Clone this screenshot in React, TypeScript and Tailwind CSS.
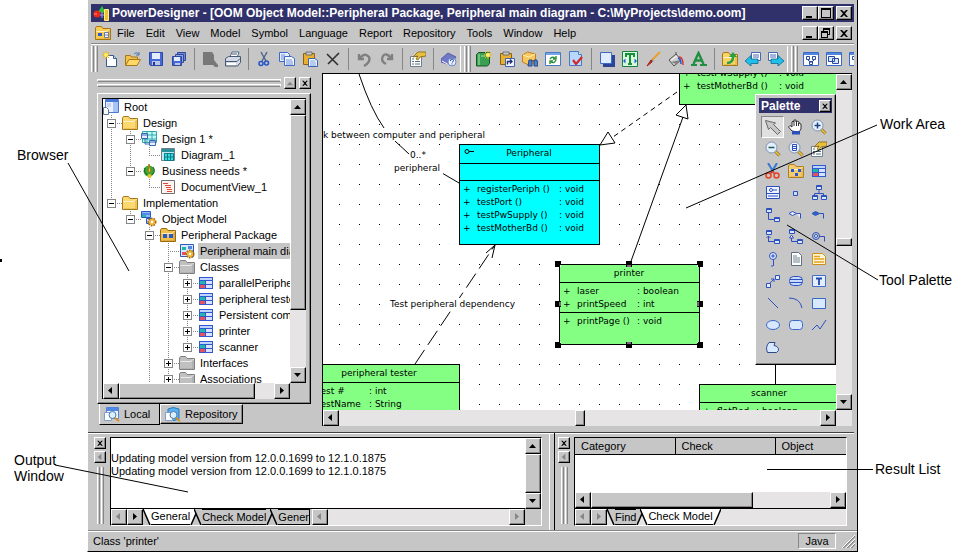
import type { ReactNode } from "react";
import clsx from "clsx";

const blue = "#2c50c0";

const magnifier = (inner: ReactNode) => (
  <>
    <path d="M10 10l4.500 4.500" stroke="#8a6a10" strokeWidth="3" />
    <path d="M10 10l4.500 4.500" stroke="#f0c850" strokeWidth="1.500" />
    <circle cx="6.500" cy="6.500" r="5.500" fill="#e4f0ff" stroke="#8090a8" />
    {inner}
  </>
);

const folder = (fill: string, dark: string) => (
  <>
    <path d="M.500 14.500V3l1-1.500h5l1.500 2h7.500v11z" fill={fill} stroke={dark} />
    <path d="M1.500 6.500h10l3-2" fill="none" stroke="#fff" opacity=".7" />
    <path d="M14 5v9H2" fill="none" stroke={dark} opacity=".4" />
  </>
);

const properties = (
  <>
    <path d="M.500 5.500h11v10h-11z" fill="#fff" stroke="#70808c" />
    <path d="M2 8h2M2 10.500h2M2 13h2M5 10.500h5M5 13h5" stroke="#507080" />
    <path d="M3 6l5-5h8v4l-6 1-2 3-2-1 2-3z" fill="#e8c040" stroke="#806010" strokeWidth=".8" />
  </>
);

const classBox = (
  <>
    <path d="M1 2h14v12H1z" fill="#3058d0" />
    <path d="M2 3h12v2H2z" fill="#c0d4fc" />
    <path d="M2 6h5v3H2z" fill="#20b8a8" />
    <path d="M2 10h5v3H2z" fill="#e85060" />
    <path d="M8 6h6v3H8zM8 10h6v3H8z" fill="#d8e4ff" />
  </>
);

const gear = (
  <>
    <circle cx="11" cy="11" r="3.500" fill="#e8a828" stroke="#a06808" strokeDasharray="1.500 1" strokeWidth="2" />
    <circle cx="11" cy="11" r="3" fill="#f0b838" />
    <circle cx="11" cy="11" r="1.200" fill="#fff" />
  </>
);

const miniBox = (x: number, y: number) => (
  <path d={`M${x + 0.5} ${y + 0.5}h5v4h-5zM${x + 0.5} ${y + 1.5}h5`} fill="#dce8ff" stroke={blue} />
);

const pages = (
  <>
    <path d="M.500 1.500h8l2 2v7H.500z" fill="#e4eeff" stroke="#4068c8" />
    <path d="M5.500 5.500h7l3 2v7h-10z" fill="#f4f8ff" stroke="#4068c8" />
    <path d="M2 4h4M2 6h3M2 8h3M7 9h6M7 11h7M7 13h7" stroke="#6890e0" />
  </>
);

const clipboard = (
  <>
    <path d="M1.500 2.500h11v11h-11z" fill="#e8b030" stroke="#906010" />
    <path d="M4 1h6v3H4z" fill="#c8c8c8" stroke="#606060" strokeWidth=".8" />
  </>
);

const viewTab = (
  <>
    <path d="M2.500 1.500h12v11h-12z" fill="#f0f6ff" stroke="#5080d8" />
    <path d="M3 2h11v3H3z" fill="#5088e8" />
    <path d="M.500 6.500h7v8h-7z" fill="#fff" stroke="#80a0d0" />
    <circle cx="8.500" cy="9" r="3.500" fill="#d8f0ff" stroke="#5878a8" />
    <path d="M11 12l4 3" stroke="#d89020" strokeWidth="2" />
  </>
);

const icons: Record<string, ReactNode> = {
  app: (
    <>
      <path d="M5 7l4-6 4 7z" fill="#30c040" />
      <circle cx="4" cy="9" r="3.500" fill="#e82818" />
      <path d="M1 9h3" stroke="#ff9080" />
      <path d="M7 10h4M9 7v6" stroke="#a0a0f0" />
      <path d="M11.500 4.500h4v11h-4z" fill="#f0c030" stroke="#fff080" />
    </>
  ),
  model: (
    <>
      {folder("#f8cc50", "#a87410")}
      <path d="M3 8h4v3H3z" fill="#2858d0" />
      <path d="M9.500 7.500h4v5h-4zM9.500 10h4" fill="#fff" stroke="#6878a8" />
    </>
  ),
  new: (
    <>
      <path d="M4.500 4.500h7l3 3v8h-10z" fill="#fff" stroke="#385890" />
      <path d="M11.500 4.500v3h3" fill="#c8dcf8" stroke="#385890" />
      <path d="M4 0v8M0 4h8M1 1l6 6M7 1L1 7" stroke="#e8b020" />
      <circle cx="4" cy="4" r="2" fill="#fff060" />
    </>
  ),
  open: (
    <>
      <path d="M.500 14V4.500h5l1 1.500h6v2" fill="#f0c048" stroke="#a87818" />
      <path d="M.500 14.500l3.500-6h11.500l-3.500 6z" fill="#ffd868" stroke="#a87818" />
      <path d="M9 3q3-3 5 1m0-3v3h-3" fill="none" stroke="#4878b0" />
    </>
  ),
  save: (
    <>
      <path d="M1.500 1.500h13v13h-12l-1-1z" fill="#4468d8" stroke="#2c48a8" />
      <path d="M4 2h8v6H4z" fill="#e4ecff" />
      <path d="M4 10h8v4H4z" fill="#b8c4e8" />
      <path d="M5 11h2v3H5z" fill="#203890" />
    </>
  ),
  saveAll: (
    <>
      <path d="M6.500 1.500h8v8h-8z" fill="#7088d8" stroke="#304898" />
      <path d="M4.500 3.500h8v8h-8z" fill="#90a4e8" stroke="#304898" />
      <path d="M1.500 5.500h9v9h-9z" fill="#4468d8" stroke="#304898" />
      <path d="M3 6h6v4H3z" fill="#e4ecff" />
      <path d="M4 12h5v2H4z" fill="#b8c4e8" />
    </>
  ),
  docGray: <path d="M1 1h9l2 3v5l4 5v2h-3l-2-2H1z" fill="#787878" />,
  print: (
    <>
      <path d="M5 6l2-5h7l-2 6" fill="#fff" stroke="#506890" />
      <path d="M.500 7.500l3-2h12v6l-3 3.500H.500z" fill="#d4dae8" stroke="#485870" />
      <path d="M1 10.500h11l3-3M7 3h5" stroke="#485870" fill="none" />
      <path d="M2 13h9" stroke="#fff" strokeWidth="2" />
    </>
  ),
  cut: (
    <>
      <path d="M5 1l5 9M11 1L6 10" stroke="#506888" strokeWidth="1.500" />
      <circle cx="5" cy="12.500" r="2" fill="none" stroke="#2858c8" strokeWidth="1.600" />
      <circle cx="10.500" cy="12" r="2" fill="none" stroke="#2858c8" strokeWidth="1.600" />
    </>
  ),
  copy: pages,
  paste: (
    <>
      {clipboard}
      <path d="M6.500 7.500h6l3 2v6h-9z" fill="#f0f6ff" stroke="#4060b0" />
      <path d="M8 10h5M8 12h6M8 14h6" stroke="#80a0e0" />
    </>
  ),
  delete: <path d="M2 3l11 11M14 2L3 13" stroke="#303030" strokeWidth="1.600" />,
  undo: <path d="M3 3v5h5M4 7q5-6 9-1 2 5-5 9" fill="none" stroke="#808080" strokeWidth="2.400" />,
  redo: <path d="M13 3v5H8M12 7Q7 1 4 5q-3 5 3 8" fill="none" stroke="#808080" strokeWidth="2.400" />,
  properties,
  help: (
    <>
      <path d="M0 8l7-6 8 4-6 8-9-3z" fill="#7078c8" stroke="#585ca8" />
      <path d="M1 10l7 4 1-1" fill="none" stroke="#fff" />
      <circle cx="11" cy="11" r="4" fill="#e8f0ff" stroke="#7088c0" />
      <path d="M9.500 10q0-2 1.500-2t1.500 1.500q0 1-1.500 2M11 12.500v1" fill="none" stroke="#2040a0" />
    </>
  ),
  book: (
    <>
      <path d="M.500 3.500l2-2h11v11l-2 2.500h-11z" fill="#38a050" stroke="#185828" />
      <path d="M3 3v11M5 5h4" stroke="#a8e0b0" />
      <path d="M12 0v8M8 4h8M9 1l6 6M15 1L9 7" stroke="#e8b800" />
      <circle cx="12" cy="4" r="2" fill="#fff080" />
    </>
  ),
  pasteLink: (
    <>
      {clipboard}
      <path d="M6.500 7.500h9v8h-9z" fill="#f0f6ff" stroke="#4060b0" />
      <path d="M8.500 13.500v-3h4.500m-2-2l2 2-2 2" fill="none" stroke="#203070" strokeWidth="1.400" />
    </>
  ),
  find: (
    <>
      <path d="M.500 4l5-3 8 2v8l-7 3-6-3z" fill="#f8c860" stroke="#c08020" />
      <path d="M1 4l6 2 6-3" fill="none" stroke="#fff0b0" />
      <path d="M7 9h3v6H6zM12 9h3l1 6h-4zM9 10h4" fill="#5080c8" stroke="#284880" />
    </>
  ),
  refresh: (
    <>
      <path d="M.500 1.500h15v13H.500z" fill="#fff" stroke="#4878c8" />
      <path d="M1 2h14v2H1z" fill="#78a4e8" />
      <path d="M5 8q2-3 5-1m1-2v3H8M11 9q-2 4-5 2m-1 2v-3h3" fill="none" stroke="#289038" strokeWidth="1.400" />
    </>
  ),
  check: (
    <>
      <path d="M1.500 .500h9l3 3v11h-12z" fill="#b8d8ff" stroke="#4878c8" />
      <path d="M10.500 .500v3h3" fill="#fff" stroke="#4878c8" />
      <path d="M5 9l3 4 6-7" fill="none" stroke="#d02828" strokeWidth="2.200" />
    </>
  ),
  shadow: (
    <>
      <path d="M4 4h12v12H4z" fill="#2c4498" />
      <path d="M1.500 1.500h11v11h-11z" fill="#e0ecff" stroke="#4068c8" />
    </>
  ),
  textFrame: (
    <>
      <path d="M.500 .500h15v15H.500z" fill="#d8f8e0" stroke="#18803c" />
      <path d="M4 6V3h8v3M8 3v10M6 13h4" fill="none" stroke="#189038" strokeWidth="2" />
      <path d="M1 10l2.500-2.500v5zM15 10l-2.500-2.500v5z" fill="#2858d0" />
    </>
  ),
  brush: (
    <>
      <path d="M15 1L7 9" stroke="#e8a030" strokeWidth="2.200" />
      <path d="M7 8l2 2-2 1-2-1z" fill="#888" />
      <path d="M6 9l-4 6 5-4z" fill="#d03020" stroke="#a02010" />
    </>
  ),
  bucket: (
    <>
      <path d="M1 9l7-6 5 6-7 6z" fill="#d0d0d0" stroke="#505050" />
      <path d="M3 11l5 2 4-4z" fill="#808080" />
      <path d="M3 9l6-4" stroke="#fff" />
      <path d="M8 3V1" stroke="#505050" />
      <path d="M11 6q4 0 4 8" fill="none" stroke="#d83030" strokeWidth="1.500" />
      <path d="M10 7q3 1 3 6" fill="none" stroke="#2858d0" strokeWidth="1.500" />
    </>
  ),
  font: (
    <>
      <path d="M2.500 13L7.500 2l5 11M5 9.500h6" fill="none" stroke="#209040" strokeWidth="2.400" />
      <path d="M0 14h6M9 14h7" stroke="#209040" strokeWidth="2" />
    </>
  ),
  folderUp: (
    <>
      {folder("#f8d468", "#a87818")}
      <path d="M5 12q6 0 6-6" fill="none" stroke="#28a040" strokeWidth="2.500" />
      <path d="M7 6l4-5 4 5z" fill="#28a040" />
    </>
  ),
  back: (
    <>
      <path d="M6.500 1.500h9v8h-9z" fill="#fff" stroke="#4868b8" />
      <path d="M8 4h6M8 6h6" stroke="#4868b8" />
      <path d="M0 10l6-5.500V8h7v4.500H6V15z" fill="#20c0e8" stroke="#106890" strokeWidth=".8" />
    </>
  ),
  forward: (
    <>
      <path d="M.500 1.500h9v8h-9z" fill="#fff" stroke="#4868b8" />
      <path d="M2 4h6M2 6h6" stroke="#4868b8" />
      <path d="M16 10l-6-5.500V8H3v4.500h7V15z" fill="#20c0e8" stroke="#106890" strokeWidth=".8" />
    </>
  ),
  diagram: (
    <>
      <path d="M.500 1.500h15v13H.500z" fill="#fff" stroke="#3868c8" />
      <path d="M1 2h14v2H1z" fill="#5088e0" />
      <path d="M3.500 5.500h3v3h-3zM9.500 5.500h3v3h-3zM6.500 10.500h3v3h-3zM5 9l3 2.500L11 9" fill="none" stroke="#2848a0" />
    </>
  ),
  windows: (
    <>
      <path d="M.500 1.500h15v13H.500z" fill="#fff" stroke="#3868c8" />
      <path d="M1 2h14v2H1z" fill="#5088e0" />
      <path d="M2.500 5.500h6v5h-6zM6.500 7.500h6v5h-6z" fill="#d8e8ff" stroke="#2848a0" />
    </>
  ),
  root: (
    <>
      <path d="M2.500.500h13v13h-13z" fill="#e8f0ff" stroke="#4878d0" />
      <path d="M3 1h12v2H3z" fill="#4878d8" />
      <path d="M10 3h5v10h-5z" fill="#a8c4f4" />
      <path d="M4 5h4M4 7h4" stroke="#a0b8e0" />
      <path d="M.500 8.500h3l2 2v5h-5z" fill="#fff" stroke="#607898" />
    </>
  ),
  folder: folder("#fcd870", "#a87818"),
  grayFolder: folder("#c0c0c0", "#808080"),
  design: (
    <>
      <path d="M1.500.500h14v11h-14zM6 1v10M11 1v10M2 4h13M2 8h13" fill="#c0fcfc" stroke="#30a8a8" />
      <path d="M.500 2.500h6v5h-6zM8.500 9.500h6v5h-6z" fill="#e8f0ff" stroke="#3868b0" />
      <path d="M4 8v5h4M1 4h6M9 11h6" fill="none" stroke="#3868b0" />
    </>
  ),
  diagramDoc: (
    <>
      <path d="M1.500 1.500h13v12h-13z" fill="#c0e8f0" stroke="#708088" />
      <path d="M2 2h12v3H2z" fill="#289098" />
      <path d="M4.500 6.500h9v7h-9zM7.500 6v7M10.500 6v7M5 10h8" fill="#30e0e0" stroke="#107888" />
    </>
  ),
  needs: (
    <>
      <circle cx="8" cy="8" r="5.500" fill="#38a838" />
      <path d="M4 5q-2 4 2 7M12 4q3 4-1 8" stroke="#186020" fill="none" />
      <path d="M8 1l2 8H7z" fill="#f0d030" stroke="#a07810" />
      <circle cx="8.500" cy="13" r="2" fill="#e8c020" />
    </>
  ),
  document: (
    <>
      <path d="M1.500 1.500h13v13h-13z" fill="#fff4f0" stroke="#707070" />
      <path d="M3 4.500h5M5 6.500h6M6 8.500h5M7 10.500h5M7 12.500h5" stroke="#e04838" />
    </>
  ),
  objectModel: (
    <>
      <path d="M.500.500h9v6h-9zM.500 3h9" fill="#90b8ff" stroke="#2858c8" />
      <path d="M1 4h4v2H1z" fill="#20b8a8" />
      <path d="M5.500 7.500h5v5h-5z" fill="#c8dcff" stroke="#2858c8" />
      {gear}
    </>
  ),
  mainDiagram: (
    <>
      <path d="M1.500 1.500h13v12h-13z" fill="#d8e8ff" stroke="#3058c0" />
      <path d="M3 4h4v3H3z" fill="#20b8a8" />
      <path d="M9 3h4v3H9z" fill="#5088e0" />
      <path d="M3 9h4v3H3z" fill="#e85060" />
      {gear}
    </>
  ),
  package: (
    <>
      {folder("#f0c048", "#986810")}
      <path d="M3 7h4v4H3zM9 7h4v4H9z" fill="#2858d0" />
    </>
  ),
  class: classBox,
  local: viewTab,
  repository: (
    <>
      <path d="M3 3q5-3 11 0v10q-5 3-11 0z" fill="#58b0f0" stroke="#2878c0" />
      <path d="M.500 6.500h7v8h-7z" fill="#fff" stroke="#80a0d0" />
      <circle cx="8.500" cy="9" r="3.500" fill="#d8f0ff" stroke="#5878a8" />
      <path d="M11 12l4 3" stroke="#d89020" strokeWidth="2" />
    </>
  ),
  pointer: <path d="M.500 1.500l3 9 2-2 7 7 3-3-7-7 2-1.500z" fill="#c8c8c8" stroke="#686868" />,
  hand: (
    <>
      <path d="M4 12L.500 8l1.500-1.500L4 8V3l1-1 1 1V1h2v2l1-1 2 1v1l2 1v5l-2 3z" fill="#fff" stroke="#303030" />
      <path d="M6 3v4M8.500 3v4M10.500 4v3" stroke="#303030" />
      <path d="M4 12h8v3.500H4z" fill="#2850b8" />
    </>
  ),
  zoomIn: magnifier(<path d="M3.500 6.500h6M6.500 3.500v6" stroke="#204080" strokeWidth="1.500" />),
  zoomOut: magnifier(<path d="M3.500 6.500h6" stroke="#206050" strokeWidth="1.500" />),
  zoomPage: magnifier(<path d="M4.500 3.500h4v6h-4zM4.500 5.500h4M4.500 7.500h4" fill="#fff" stroke={blue} />),
  scissors: (
    <>
      <path d="M3 0l6 10M12 0L6 10" stroke="#3878d0" strokeWidth="2" />
      <circle cx="3.500" cy="12.500" r="2.500" fill="none" stroke="#e84020" strokeWidth="1.500" />
      <circle cx="11.500" cy="12.500" r="2.500" fill="none" stroke="#e84020" strokeWidth="1.500" />
      <path d="M5 11l2.500-2.500L10 11" fill="none" stroke="#e84020" strokeWidth="1.500" />
    </>
  ),
  palPackage: (
    <>
      {folder("#f4cc70", "#b08020")}
      <path d="M3 6h3v3H3zM10 6h3v3h-3zM7 10h3v3H7z" fill="#2858d0" />
    </>
  ),
  interface: (
    <>
      <path d="M1.500 1.500h13v12h-13zM2 8.500h12M3 11h10" fill="#f0f4ff" stroke={blue} />
      <circle cx="6" cy="5" r="1.500" fill="#fff" stroke={blue} />
      <path d="M8 5h4" stroke={blue} />
    </>
  ),
  port: <path d="M5.500 6.500h4v4h-4z" fill="#c8e0ff" stroke={blue} />,
  generalize: (
    <>
      {miniBox(5, 0)}
      {miniBox(1, 10)}
      {miniBox(10, 10)}
      <path d="M8 5v3M3.500 10V8.500h9V10" fill="none" stroke={blue} />
    </>
  ),
  associate: (
    <>
      {miniBox(1, 1)}
      {miniBox(9, 10)}
      <path d="M3.500 6v6.500H9" fill="none" stroke={blue} />
    </>
  ),
  aggregate: <path d="M1 6.500l3.500-2 4 2-4 2zM8.500 6.500h4v5" fill="#e8f0ff" stroke={blue} />,
  compose: (
    <>
      <path d="M1 6.500l3.500-2 4 2-4 2z" fill="#3060c0" stroke={blue} />
      <path d="M8.500 6.500h4v5" fill="none" stroke={blue} />
    </>
  ),
  depend: (
    <>
      {miniBox(1, 1)}
      {miniBox(9, 10)}
      <path d="M3.500 13V7l-2 2m2-2l2 2M3.500 12.500H9" fill="none" stroke={blue} />
    </>
  ),
  realize: (
    <>
      {miniBox(1, 0)}
      {miniBox(9, 10)}
      <path d="M3.500 6l-2 3h4z" fill="#fff" stroke={blue} />
      <path d="M3.500 9v3.500H9" fill="none" stroke={blue} />
    </>
  ),
  require: (
    <>
      <circle cx="5" cy="7" r="3.500" fill="none" stroke={blue} />
      <circle cx="5" cy="7" r="1.500" fill="#fff" stroke={blue} />
      <path d="M8 7.500h5.500v5" fill="none" stroke={blue} />
    </>
  ),
  provide: (
    <>
      <circle cx="8" cy="5" r="3.500" fill="#e8f0ff" stroke={blue} />
      <path d="M6 5h4M8 3v4M8.500 9v6M6 15h2" stroke={blue} />
    </>
  ),
  file: (
    <>
      <path d="M3.500 1.500h7l3 3v10h-10z" fill="#fff" stroke="#607080" />
      <path d="M5 5h4M5 7h7M5 9h7M5 11h7" stroke="#708090" />
    </>
  ),
  note: (
    <>
      <path d="M1.500 2.500h10l3 3v8h-13z" fill="#fff8d8" stroke="#d09018" />
      <path d="M3 5.500h6M3 8h10M3 11h10" stroke="#e8a020" strokeWidth="1.500" />
    </>
  ),
  link: (
    <>
      <path d="M1.500 10.500h4v4h-4zM10.500 2.500h4v4h-4z" fill="#e8f0ff" stroke={blue} />
      <path d="M5 10l4-4M9 9V6H6" fill="none" stroke={blue} />
    </>
  ),
  title: (
    <>
      <rect x="1.500" y="3.500" width="13" height="9" rx="4" fill="#c8dcff" stroke={blue} />
      <path d="M2 6.500h12M2 9.500h12" stroke={blue} />
    </>
  ),
  textBox: (
    <>
      <path d="M1.500 2.500h13v11h-13z" fill="#e4eeff" stroke="#4070c8" />
      <path d="M5 5.500h6M8 5.500V12" stroke="#2448a8" strokeWidth="1.800" />
    </>
  ),
  line: <path d="M3 3l10 10" stroke={blue} />,
  arc: <path d="M1 3q11 0 13 10" fill="none" stroke={blue} />,
  rect: <path d="M1.500 3.500h13v10h-13z" fill="#d8e8ff" stroke="#3868c8" />,
  ellipse: <ellipse cx="8" cy="8" rx="6.500" ry="4.500" fill="#d8e8ff" stroke="#3868c8" />,
  roundRect: <rect x="1.500" y="3.500" width="13" height="9" rx="3" fill="#d8e8ff" stroke="#3868c8" />,
  polyline: <path d="M1 13l5-5 3 4 6-9" fill="none" stroke={blue} />,
  polygon: (
    <path d="M4 3.500h6l-1 3q5 1 4.500 5l-2 2H2.500Q0 8 4 3.500z" fill="#d8e8ff" stroke="#2c4890" />
  ),
};

const Icon = ({ name, className }: { name: string; className?: string }) => (
  <svg viewBox="0 0 16 16" className={clsx("h-4 w-4 shrink-0", className)} aria-hidden="true">
    {icons[name]}
  </svg>
);

const raised =
  "border border-t-white border-l-white border-r-black border-b-black bg-[#c6c6c6] shadow-[inset_-1px_-1px_0_#868686]";

const arrows = {
  up: "M3 9h7L6.500 5z",
  down: "M3 5h7L6.500 9z",
  left: "M8 3v7L4 6.500z",
  right: "M5 3v7l4-3.500z",
};

type Direction = keyof typeof arrows;

const ArrowButton = ({ dir, label, disabled }: { dir: Direction; label: string; disabled?: boolean }) => (
  <button type="button" aria-label={label} disabled={disabled} className={clsx("h-4 w-4 shrink-0", raised)}>
    <svg viewBox="0 0 14 14" className="h-[14px] w-[14px]">
      <path d={arrows[dir]} fill={disabled ? "#868686" : "#000"} />
    </svg>
  </button>
);

const controls = {
  minimize: <path d="M3 9h6v2H3z" />,
  maximize: <path d="M2 1h10v10H2zM3 3v7h8V3z" fillRule="evenodd" />,
  restore: <path d="M4 1h7v7H9v3H2V4h2zM5 3v1h4v3h1V3zM3 6v4h5V6z" fillRule="evenodd" />,
  close: <path d="M3 3h2l2 2 2-2h2L8 6.500 11 10H9L7 8l-2 2H3l3-3.500z" />,
};

const ControlButton = ({ kind, label, small }: { kind: keyof typeof controls; label: string; small?: boolean }) => (
  <button
    type="button"
    aria-label={label}
    className={clsx("flex shrink-0 items-center justify-center", raised, small ? "h-3 w-3" : "h-[14px] w-4")}
  >
    <svg viewBox="0 0 14 12" className={small ? "h-[10px] w-[11px]" : "h-3 w-[14px]"}>
      {controls[kind]}
    </svg>
  </button>
);

const PinButton = ({ dir }: { dir: Direction }) => (
  <button type="button" aria-label="Collapse panel" className={clsx("h-3 w-3 shrink-0", raised)}>
    <svg viewBox="1 1 11 11" className="h-[10px] w-[10px]">
      <path d={arrows[dir]} fill="#868686" />
    </svg>
  </button>
);

const menus = ["File", "Edit", "View", "Model", "Symbol", "Language", "Report", "Repository", "Tools", "Window", "Help"];

const toolbars = [
  [
    ["new", "open", "save", "saveAll"],
    ["docGray", "print"],
    ["cut", "copy", "paste", "delete"],
    ["undo", "redo"],
    ["properties"],
    ["help"],
  ],
  [
    ["book", "pasteLink", "find", "refresh", "check"],
    ["shadow", "textFrame", "brush", "bucket", "font"],
    ["folderUp", "back", "forward"],
  ],
  [["diagram", "windows", "diagram"]],
];

const bar = "w-[3px] border-l border-white border-r border-r-[#868686]";

const Toolbar = () => (
  <div className="mx-[3px] flex h-[30px] items-center overflow-hidden border-t border-[#868686] shadow-[inset_0_1px_0_#fff]">
    {toolbars.map((groups, i) => (
      <div key={i} className="flex shrink-0 items-center">
        <div className={clsx("flex h-[26px] gap-px", i === 0 ? "w-[7px]" : "w-3 border-l border-white pl-[3px]")}>
          <span className={bar} />
          <span className={bar} />
        </div>
        {groups.map((group, j) => (
          <div key={j} className="flex items-center">
            {j > 0 && <span className="mr-[3px] ml-1 h-[22px] w-px bg-[#868686]" />}
            {group.map((name, k) => (
              <button key={k} type="button" aria-label={name} className="flex h-6 w-[23px] items-center justify-center">
                <Icon name={name} />
              </button>
            ))}
          </div>
        ))}
      </div>
    ))}
  </div>
);

// Each guide character is one indent cell: | passes through, t branches, l ends, - is empty.
const tree = [
  { guides: "", icon: "root", text: "Root" },
  { guides: "t", box: "-", icon: "folder", text: "Design" },
  { guides: "|t", box: "-", icon: "design", text: "Design 1 *" },
  { guides: "||l", icon: "diagramDoc", text: "Diagram_1" },
  { guides: "|l", box: "-", icon: "needs", text: "Business needs *" },
  { guides: "|-l", icon: "document", text: "DocumentView_1" },
  { guides: "l", box: "-", icon: "folder", text: "Implementation" },
  { guides: "-l", box: "-", icon: "objectModel", text: "Object Model" },
  { guides: "--t", box: "-", icon: "package", text: "Peripheral Package" },
  { guides: "--|t", icon: "mainDiagram", text: "Peripheral main diagram", selected: true },
  { guides: "--|t", box: "-", icon: "grayFolder", text: "Classes" },
  { guides: "--||t", box: "+", icon: "class", text: "parallelPeripheral" },
  { guides: "--||t", box: "+", icon: "class", text: "peripheral tester" },
  { guides: "--||t", box: "+", icon: "class", text: "Persistent computer" },
  { guides: "--||t", box: "+", icon: "class", text: "printer" },
  { guides: "--||l", box: "+", icon: "class", text: "scanner" },
  { guides: "--|t", box: "+", icon: "grayFolder", text: "Interfaces" },
  { guides: "--|t", box: "+", icon: "grayFolder", text: "Associations" },
];

const Guide = ({ kind, box }: { kind: string; box?: string }) => (
  <svg viewBox="0 0 19 16" className="h-4 w-[19px] shrink-0" shapeRendering="crispEdges" aria-hidden="true">
    <g stroke="#868686" strokeDasharray="1 1" fill="none">
      {(kind === "|" || kind === "t") && <path d="M8.500 0v16" />}
      {kind === "l" && <path d="M8.500 0v8" />}
      {(kind === "t" || kind === "l") && <path d="M8 8.500h11" />}
    </g>
    {box && (
      <>
        <path d="M4.500 4.500h8v8h-8z" fill="#fff" stroke="#868686" />
        <path d={box === "+" ? "M6 8.500h5M8.500 6v5" : "M6 8.500h5"} stroke="#000" />
      </>
    )}
  </svg>
);

const Browser = () => (
  <section aria-label="Browser" className="flex w-[234px] shrink-0 flex-col pt-1 pr-[11px] pl-[9px]">
    <div className="flex h-3 items-center gap-[3px]">
      <div className="flex flex-1 flex-col gap-[2px]">
        <span className="h-[3px] border border-white border-b-[#868686]" />
        <span className="h-[3px] border border-white border-b-[#868686]" />
      </div>
      <PinButton dir="up" />
      <ControlButton kind="close" label="Close browser" small />
    </div>
    <div className={clsx("mt-1 p-1", raised)}>
      <div className="border-t border-l border-black">
        <div className="flex h-[284px]">
          <ul className="min-w-0 flex-1 overflow-hidden bg-white">
            {tree.map((row, i) => (
              <li key={i} className="flex h-4 items-center whitespace-nowrap">
                {row.guides.split("").map((kind, j) => (
                  <Guide key={j} kind={kind} box={j === row.guides.length - 1 ? row.box : undefined} />
                ))}
                <Icon name={row.icon} />
                <span className={clsx("ml-[3px] px-[2px] leading-4", row.selected && "bg-[#c6c6c6]")}>{row.text}</span>
              </li>
            ))}
          </ul>
          <div className="flex w-4 flex-col bg-[#e6e4e4]">
            <ArrowButton dir="up" label="Scroll up" />
            <div className={clsx("h-[195px]", raised)} />
            <div className="flex-1" />
            <ArrowButton dir="down" label="Scroll down" />
          </div>
        </div>
        <div className="flex h-4">
          <div className="flex flex-1 bg-[#e6e4e4]">
            <ArrowButton dir="left" label="Scroll left" />
            <div className={clsx("w-[136px]", raised)} />
            <div className="flex-1" />
            <ArrowButton dir="right" label="Scroll right" />
          </div>
          <div className="w-4" />
        </div>
      </div>
    </div>
    <div role="tablist" className="ml-[2px] flex items-start">
      <button
        type="button"
        role="tab"
        aria-selected="true"
        className="flex h-[21px] w-[61px] items-center gap-1 border-r border-b border-l border-r-black border-b-black border-l-white pl-1"
      >
        <Icon name="local" />
        Local
      </button>
      <button type="button" role="tab" className={clsx("flex h-5 w-[83px] items-center gap-1 pl-1", raised)}>
        <Icon name="repository" />
        Repository
      </button>
    </div>
  </section>
);

type Member = { name: string; type: string; at: number };

type ClassNodeProps = {
  name?: string;
  x: number;
  y: number;
  width: number;
  height: number;
  typeX: number;
  fill?: string;
  members?: Member[];
  lines?: number[];
  children?: ReactNode;
};

const ClassNode = ({ name, x, y, width, height, typeX, fill = "#84ff84", members = [], lines = [], children }: ClassNodeProps) => (
  <g transform={`translate(${x} ${y})`}>
    <rect x=".5" y=".5" width={width} height={height} fill={fill} stroke="#000" shapeRendering="crispEdges" />
    {lines.map((line) => (
      <path key={line} d={`M0 ${line + 0.5}h${width}`} stroke="#000" shapeRendering="crispEdges" />
    ))}
    {name && (
      <text x={width / 2} y="12" textAnchor="middle">
        {name}
      </text>
    )}
    {members.map((member) => (
      <g key={member.name}>
        <text x="4" y={member.at}>+</text>
        <text x="18" y={member.at}>{member.name}</text>
        <text x={typeX} y={member.at}>: {member.type}</text>
      </g>
    ))}
    {children}
  </g>
);

const handles = [
  [-4, -3], [67, -3], [138, -3], [-4, 37], [138, 37], [-4, 78], [67, 78], [138, 78],
];

const Diagram = () => (
  <svg className="absolute inset-0 h-full w-full font-['DejaVu_Sans',sans-serif] text-[9px]" aria-label="Peripheral main diagram">
    <defs>
      <pattern id="dots" x="16" y="10" width="20" height="20" patternUnits="userSpaceOnUse">
        <rect width="1" height="1" fill="#000" />
      </pattern>
    </defs>
    <rect width="100%" height="100%" fill="url(#dots)" />
    <g fill="none" stroke="#000">
      <path d="M36 0Q48 36 61 54M72 67l14 13M119 99l17 10" />
      <path d="M92 290L172 171" strokeDasharray="17 6" />
      <path d="M163 179l9-8-3 13" />
      <path d="M354 18L290 63" strokeDasharray="5 4" />
      <path d="M277 71l8-13 7 11z" fill="#fff" />
      <path d="M307 190l53-147M363 31l-10 10 12 4z" fill="#fff" />
      <path d="M452.500 290v20" />
    </g>
    <g fill="#fff">
      <rect x="0" y="55" width="168" height="12" />
      <rect x="86" y="75" width="18" height="11" />
      <rect x="70" y="88" width="50" height="12" />
      <rect x="65" y="224" width="135" height="12" />
    </g>
    <text x="0" y="64">k between computer and peripheral</text>
    <text x="87" y="84">0..*</text>
    <text x="71" y="97">peripheral</text>
    <text x="67" y="233">Test peripheral dependency</text>
    <ClassNode
      name="Peripheral"
      x={136}
      y={70}
      width={140}
      height={100}
      typeX={100}
      fill="#00ffff"
      lines={[19, 36]}
      members={[
        { name: "registerPeriph ()", type: "void", at: 48 },
        { name: "testPort ()", type: "void", at: 61 },
        { name: "testPwSupply ()", type: "void", at: 74 },
        { name: "testMotherBd ()", type: "void", at: 87 },
      ]}
    >
      <circle cx="8" cy="7.500" r="2" fill="none" stroke="#000" />
      <path d="M10 7.500h5" stroke="#000" />
    </ClassNode>
    <ClassNode
      x={356}
      y={-20}
      width={170}
      height={50}
      typeX={100}
      members={[
        { name: "testPwSupply ()", type: "void", at: 22 },
        { name: "testMotherBd ()", type: "void", at: 35 },
      ]}
    />
    <ClassNode
      name="peripheral tester"
      x={-24}
      y={290}
      width={160}
      height={80}
      typeX={70}
      lines={[18]}
      members={[
        { name: "test #", type: "int", at: 30 },
        { name: "testName", type: "String", at: 43 },
      ]}
    />
    <ClassNode
      name="scanner"
      x={376}
      y={310}
      width={140}
      height={80}
      typeX={57}
      lines={[18]}
      members={[{ name: "flatBed", type: "boolean", at: 30 }]}
    />
    <ClassNode
      name="printer"
      x={236}
      y={190}
      width={140}
      height={80}
      typeX={78}
      lines={[18, 48]}
      members={[
        { name: "laser", type: "boolean", at: 30 },
        { name: "printSpeed", type: "int", at: 43 },
        { name: "printPage ()", type: "void", at: 60 },
      ]}
    >
      {handles.map(([x, y]) => (
        <rect key={`${x} ${y}`} x={x} y={y} width="6" height="6" fill="#000" />
      ))}
      <path d="M68 1h4v2h-4zM68 78h4v2h-4zM0 38h2v4H0zM138 38h2v4h-2z" fill="#806080" />
      <path d="M1 1h1v2H1zM138 1h1v2h-1zM1 78h1v1H1zM138 78h1v1h-1z" fill="#fff" />
    </ClassNode>
  </svg>
);

const tools = [
  "pointer", "hand", "zoomIn",
  "zoomOut", "zoomPage", "properties",
  "scissors", "palPackage", "class",
  "interface", "port", "generalize",
  "associate", "aggregate", "compose",
  "depend", "realize", "require",
  "provide", "file", "note",
  "link", "title", "textBox",
  "line", "arc", "rect",
  "ellipse", "roundRect", "polyline",
  "polygon",
];

const Palette = () => (
  <div className={clsx("absolute top-5 right-0 w-[81px] p-[3px] pb-[6px]", raised)}>
    <div className="flex h-[15px] items-center justify-between bg-[#30306a] pr-px pl-[2px] text-[12px] font-bold text-white">
      Palette
      <ControlButton kind="close" label="Close palette" small />
    </div>
    <div className="mx-auto mt-[3px] grid w-[69px] grid-cols-3">
      {tools.map((name) => (
        <button
          key={name}
          type="button"
          aria-label={name}
          className={clsx(
            "flex h-[22px] items-center justify-center",
            name === "pointer" && "border border-[#868686] border-r-white border-b-white bg-[#e0e0e0]",
          )}
        >
          <Icon name={name} />
        </button>
      ))}
    </div>
  </div>
);

const WorkArea = () => (
  <section aria-label="Work area" className="mr-[5px] min-w-0 flex-1 border-t border-l border-black">
    <div className="flex">
      <div className="relative h-[336px] min-w-0 flex-1 overflow-hidden bg-white">
        <Diagram />
        <Palette />
      </div>
      <div className="flex w-4 flex-col bg-[#e6e4e4]">
        <ArrowButton dir="up" label="Scroll up" />
        <div className="flex-1" />
        <div className={clsx("h-2", raised)} />
        <div className="flex-1" />
        <ArrowButton dir="down" label="Scroll down" />
      </div>
    </div>
    <div className="flex h-4 bg-[#e6e4e4]">
      <ArrowButton dir="left" label="Scroll left" />
      <div className="flex-1" />
      <div className={clsx("w-[10px]", raised)} />
      <div className="flex-1" />
      <ArrowButton dir="right" label="Scroll right" />
      <div className="w-4" />
    </div>
  </section>
);

const DockGrip = () => (
  <div className="flex w-3 shrink-0 flex-col items-center gap-[2px]">
    <ControlButton kind="close" label="Close panel" small />
    <PinButton dir="left" />
    <div className="mt-[2px] flex flex-1 gap-px pb-[2px]">
      <span className={bar} />
      <span className={bar} />
    </div>
  </div>
);

const SheetTab = ({ text, active, next }: { text: string; active?: boolean; next?: boolean }) => (
  <button type="button" role="tab" aria-selected={!!active} className="flex h-4 shrink-0">
    <svg viewBox="0 0 8 16" className="h-4 w-2 shrink-0" aria-hidden="true">
      <path d="M0 0h8v16H7z" fill={active ? "#fff" : "#c6c6c6"} />
      <path d="M0 0l7 16" stroke="#000" strokeWidth="1.500" />
    </svg>
    <span className={clsx("border-b border-black", active ? "bg-white leading-[15px]" : "border-t bg-[#c6c6c6] leading-[14px]")}>
      {text}
    </span>
    <svg viewBox="0 0 8 16" className={clsx("h-4 w-2 shrink-0", next && "-mr-1")} aria-hidden="true">
      <path d="M0 0h8L1 16H0z" fill={active ? "#fff" : "#c6c6c6"} />
      <path d="M8 0L1 16" stroke="#000" strokeWidth="1.500" />
    </svg>
  </button>
);

const Output = () => (
  <section aria-label="Output" className="mr-1 flex min-w-0 flex-1 gap-1 border-r border-white pt-1 pr-[7px] pb-1 pl-[6px]">
    <DockGrip />
    <div className="min-w-0 flex-1 border border-r-white border-b-white border-t-black border-l-black">
      <div className="flex h-[71px]">
        <div className="min-w-0 flex-1 overflow-hidden border-b border-black bg-white pt-[14px] leading-[13px] whitespace-nowrap">
          <p>Updating model version from 12.0.0.1699 to 12.1.0.1875</p>
          <p>Updating model version from 12.0.0.1699 to 12.1.0.1875</p>
        </div>
        <div className="flex w-4 flex-col bg-[#e6e4e4]">
          <ArrowButton dir="up" label="Scroll up" />
          <div className={clsx("flex-1", raised)} />
          <ArrowButton dir="down" label="Scroll down" />
        </div>
      </div>
      <div className="flex h-4">
        <ArrowButton dir="left" label="Previous tab" disabled />
        <ArrowButton dir="right" label="Next tab" />
        <div role="tablist" className="flex w-[167px] shrink-0 overflow-hidden border-r border-black">
          <SheetTab text="General" active next />
          <SheetTab text="Check Model" next />
          <SheetTab text="Generation" />
        </div>
        <div className="ml-[2px] flex flex-1 bg-[#e6e4e4]">
          <ArrowButton dir="left" label="Scroll left" disabled />
          <div className="flex-1" />
          <ArrowButton dir="right" label="Scroll right" disabled />
        </div>
        <div className="w-4" />
      </div>
    </div>
  </section>
);

const ResultList = () => (
  <section aria-label="Result list" className="flex w-[300px] shrink-0 gap-1 border-l border-black pt-1 pr-[7px] pb-1 pl-[3px]">
    <DockGrip />
    <div className="min-w-0 flex-1 border border-r-white border-b-white border-t-black border-l-black">
      <div className="h-[54px] bg-white">
        <table className="w-full table-fixed border-collapse">
          <thead>
            <tr className="h-4 border-b border-black bg-[#c6c6c6] text-left leading-4">
              <th className="w-[100px] border-r border-black pl-[6px] font-normal">Category</th>
              <th className="w-[100px] border-r border-black pl-[6px] font-normal">Check</th>
              <th className="pl-[6px] font-normal">Object</th>
            </tr>
          </thead>
        </table>
      </div>
      <div className="flex h-[17px] border-b border-black bg-[#e6e4e4]">
        <ArrowButton dir="left" label="Scroll left" />
        <div className={clsx("w-[162px]", raised)} />
        <div className="flex-1" />
        <ArrowButton dir="right" label="Scroll right" />
      </div>
      <div className="flex h-4 bg-[#e6e4e4]">
        <ArrowButton dir="left" label="Previous tab" disabled />
        <ArrowButton dir="right" label="Next tab" disabled />
        <div role="tablist" className="flex">
          <SheetTab text="Find" next />
          <SheetTab text="Check Model" active />
        </div>
      </div>
    </div>
  </section>
);

const StatusBar = () => (
  <footer className="flex h-[21px] items-center justify-between border-t border-[#868686] pl-[5px] shadow-[inset_0_1px_0_#fff]">
    <span>Class 'printer'</span>
    <div className="flex items-center gap-[5px] pr-[2px]">
      <span className="h-4 w-[38px] border border-[#868686] border-r-white border-b-white text-center leading-[14px]">Java</span>
      <svg viewBox="0 0 14 14" className="h-[14px] w-[14px]" aria-hidden="true">
        <path d="M2 14L14 2M6 14l8-8M10 14l4-4" stroke="#868686" strokeWidth="1.500" />
        <path d="M1 14L14 1M5 14l9-9M9 14l5-5" stroke="#fff" />
      </svg>
    </div>
  </footer>
);

const AppWindow = () => (
  <main className="min-w-0 flex-1 border-r border-b border-l border-r-black border-b-black border-l-white bg-[#c6c6c6] pt-1">
    <header className="mx-[3px] flex h-[18px] items-center bg-[#30306a] pr-[2px] pl-[2px] text-white">
      <Icon name="app" />
      <h1 className="ml-[3px] min-w-0 flex-1 truncate text-[12px] font-bold">
        PowerDesigner - [OOM Object Model::Peripheral Package, Peripheral main diagram - C:\MyProjects\demo.oom]
      </h1>
      <div className="flex text-black">
        <ControlButton kind="minimize" label="Minimize" />
        <ControlButton kind="maximize" label="Maximize" />
        <span className="w-[2px]" />
        <ControlButton kind="close" label="Close" />
      </div>
    </header>
    <nav className="mx-[3px] flex h-[21px] items-center pr-[2px] pl-1">
      <Icon name="model" />
      <div className="ml-[6px] flex flex-1 gap-[11px]">
        {menus.map((menu) => (
          <button key={menu} type="button">
            {menu}
          </button>
        ))}
      </div>
      <ControlButton kind="minimize" label="Minimize diagram" />
      <ControlButton kind="restore" label="Restore diagram" />
      <span className="w-[2px]" />
      <ControlButton kind="close" label="Close diagram" />
    </nav>
    <Toolbar />
    <div className="flex pb-[6px]">
      <Browser />
      <WorkArea />
    </div>
    <div className="mr-[3px] flex h-[98px] border-t border-[#404040] shadow-[inset_0_1px_0_#fff]">
      <Output />
      <ResultList />
    </div>
    <StatusBar />
  </main>
);

const App = () => (
  <div className="relative flex overflow-hidden bg-white pb-[2px] font-['Liberation_Sans',Arial,sans-serif] text-[11px] leading-4 text-black">
    <aside className="w-[87px] shrink-0 pt-[147px] text-[14px]">
      <p className="pl-[17px]">Browser</p>
      <div className="mt-24 h-[3px] w-[2px] bg-black" />
      <p className="mt-[190px] pl-[14px]">
        Output
        <br />
        Window
      </p>
    </aside>
    <AppWindow />
    <aside className="w-[104px] shrink-0 pt-[116px] text-[14px] whitespace-nowrap">
      <p className="pl-[22px]">Work Area</p>
      <p className="mt-[140px] pl-[21px]">Tool Palette</p>
      <p className="mt-[173px] pl-[17px]">Result List</p>
    </aside>
    <svg className="pointer-events-none absolute inset-0 h-full w-full" stroke="#000" aria-hidden="true">
      <path d="M68 163l61 108M55 465l133 27M877 125L686 208M787 225l91 55M767 469.500h106" fill="none" />
    </svg>
  </div>
);

export default App;
